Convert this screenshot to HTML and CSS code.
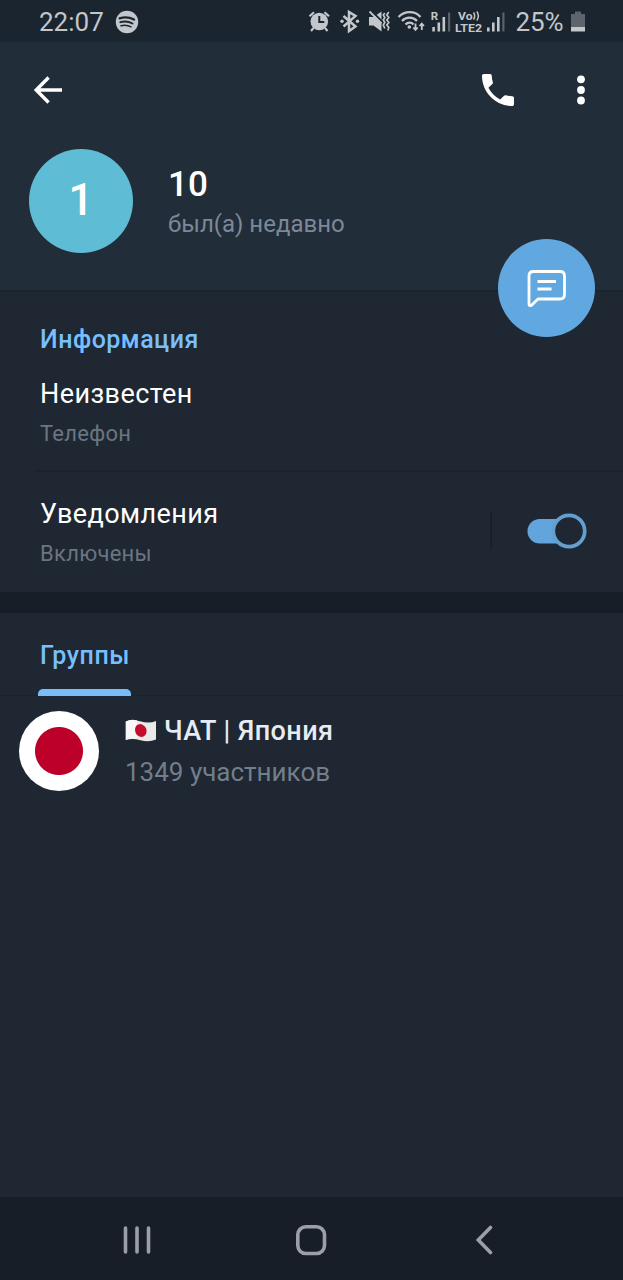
FILE: index.html
```html
<!DOCTYPE html>
<html lang="ru">
<head>
<meta charset="utf-8">
<title>10</title>
<link rel="stylesheet" href="styles.css">
</head>
<body>
<div class="screen">
  <div class="status">
    <span class="clock">22:07</span>
    <svg class="spotify" width="24" height="24" viewBox="0 0 24 24"><circle cx="12" cy="12" r="11.2" fill="#c3c6ca"/><g fill="none" stroke="#1c2630" stroke-linecap="round"><path d="M4.600 8.300c5-1.400 10.200-.9 14.400 1.300" stroke-width="2.300"/><path d="M5.300 12.200c4.200-1.200 8.600-.7 12.200 1.300" stroke-width="1.900"/><path d="M6 15.700c3.500-.9 7-.6 10 1.200" stroke-width="1.500"/></g></svg>
    <svg class="indicators" width="290" height="44" viewBox="300 0 290 44">
      <g fill="#c3c6ca" stroke="#c3c6ca" stroke-width="0">
        <circle cx="319.300" cy="21.500" r="8.800"/>
        <path d="M319.300 16v6h5" fill="none" stroke="#1c2630" stroke-width="2"/>
        <path d="M309.500 16.300l4.500-4M329 16.300l-4.500-4M313.500 28l-2.500 3M325 28l2.500 3" fill="none" stroke-width="2.200"/>
        <path d="M343.500 16l12 10.500-6.500 4.500V12l6.500 4-12 10.500" fill="none" stroke-width="2.500" stroke-linejoin="miter"/>
        <circle cx="342" cy="21.300" r="1.700"/><circle cx="357.500" cy="21.300" r="1.700"/>
        <path d="M369 17h4.500l8-5.500v20l-8-6H369z"/>
        <path d="M371 10.500l12.500 12.500" fill="none" stroke="#1c2630" stroke-width="2"/>
        <path d="M369.500 11.500l12 12" fill="none" stroke-width="1.800"/>
        <path d="M384.800 13l-1.500 2 1.500 2.500-1.500 2.500 1.500 2.500-1.500 2.500 1.500 3.500M388.800 12l-2 3 2 2.500-2 2.500 2 2.500-2 2.500 2 2.500-1 3" fill="none" stroke-width="1.700"/>
        <path d="M398.500 17c6-6.500 16.500-6.500 22 0M402 21c4-4.500 11-4.500 15 0M405.500 24.500c2.200-2.500 6-2.500 8 0" fill="none" stroke-width="2.200"/>
        <circle cx="409.300" cy="27" r="1.800"/>
        <path d="M415.500 23.500v6M413.300 27.500l2.200 2.500 2.200-2.500M421.800 30v-6M419.600 26l2.200-2.500 2.200 2.500" fill="none" stroke-width="1.800"/>
        <path d="M432.300 27h2.600v4.500h-2.600zM437.500 22.500h2.600v9h-2.600zM442.500 17h2.600v14.500h-2.600z"/>
        <path d="M448 12.500h2.200v19H448z" opacity=".38"/>
        <path d="M487 27.500h2.600v4H487zM492 22.500h2.600v9H492zM497 17h2.600v14.500H497z"/>
        <path d="M502.300 12.500h2.200v19h-2.200z" opacity=".38"/>
        <path d="M571 14h4v-2.500h6V14h4v13.500h-14z" fill="#5d646d"/>
        <path d="M571 27h14v4.500h-14z"/>
        <text x="430.700" y="19.500" class="tiny">R</text>
        <text x="458" y="20" class="tiny" textLength="14.500" lengthAdjust="spacingAndGlyphs">Vo</text>
        <path d="M473.500 12.500q2.400 3.500 0 7M476.800 11.500q3.200 4.500 0 9" fill="none" stroke-width="1.500"/>
        <text x="455" y="31.500" class="tiny" textLength="27" lengthAdjust="spacingAndGlyphs">LTE2</text>
        <text x="515.500" y="31" class="percent" textLength="48">25%</text>
      </g>
    </svg>
  </div>
  <header class="header">
    <div class="toolbar">
      <svg width="30" height="30" viewBox="0 0 30 30" fill="none" stroke="#fff" stroke-width="3.400"><path d="M29 15H4M15.600 2.500L3.200 15l12.400 12.500"/></svg>
      <svg class="call" width="32" height="32" viewBox="3 3 18 18" fill="#fff"><path d="M6.620 10.790c1.440 2.830 3.760 5.140 6.590 6.590l2.200-2.200c.27-.27.670-.36 1.020-.24 1.120.37 2.330.57 3.570.57.550 0 1 .45 1 1V20c0 .55-.45 1-1 1C10.610 21 3 13.390 3 4c0-.55.450-1 1-1h3.500c.550 0 1 .45 1 1 0 1.250.200 2.450.570 3.570.110.350.030.740-.250 1.020z"/></svg>
      <svg width="8" height="30" viewBox="0 0 8 30" fill="#fff"><circle cx="4" cy="4.300" r="3.900"/><circle cx="4" cy="15" r="3.900"/><circle cx="4" cy="25.500" r="3.900"/></svg>
    </div>
    <div class="profile">
      <div class="avatar">1</div>
      <div class="who"><div class="name">10</div><div class="seen">был(а) недавно</div></div>
    </div>
    <div class="fab"><svg width="40" height="40" viewBox="0 0 40 40" fill="none" stroke="#fff" stroke-width="2.800" stroke-linejoin="round" stroke-linecap="round"><path d="M6.500 3.500H33q4.500 0 4.500 4.500V26.500q0 4.500-4.500 4.500H11L4.500 37.300Q2 38.500 2 36V8q0-4.500 4.500-4.500z"/><path d="M10.500 13.500h18.500M10.500 21h14" stroke-linecap="butt"/></svg></div>
  </header>
  <section class="info">
    <h2 class="section-title">Информация</h2>
    <div class="row"><div class="value">Неизвестен</div><div class="label">Телефон</div></div>
    <div class="row notify">
      <div class="grow"><div class="value">Уведомления</div><div class="label">Включены</div></div>
      <div class="separator"></div>
      <svg width="60" height="36" viewBox="0 0 60 36"><rect x=".5" y="6" width="46" height="24.500" rx="12.200" fill="#62a5dc"/><circle cx="42" cy="18" r="15.700" fill="#1e2732" stroke="#639fd1" stroke-width="3.700"/></svg>
    </div>
  </section>
  <section class="groups">
    <div class="tabs"><div class="tab">Группы</div></div>
    <div class="chat">
      <div class="chat-avatar"></div>
      <div class="chat-text">
        <div class="chat-title">
          <svg width="32" height="24" viewBox="0 0 32 24"><path d="M.8 2.500Q6-.5 15 2.200T31 2v18.500q-7 3-15.500.7T.8 21z" fill="#e9e9e9"/><path d="M.8 2.500Q6-.5 12 1.500v18.200q-6-1.500-11.200 1.300z" fill="#f7f7f7"/><ellipse cx="15.800" cy="11.500" rx="5.700" ry="6.500" transform="rotate(-25 15.800 11.500)" fill="#c40d2c"/></svg>
          <span>ЧАТ | Япония</span>
        </div>
        <div class="members">1349 участников</div>
      </div>
    </div>
  </section>
  <nav class="nav">
    <svg width="28" height="30" viewBox="0 0 28 30" stroke="#9a9fa8" stroke-width="3.600" stroke-linecap="round"><path d="M2.500 3v24M14 3v24M25.500 3v24"/></svg>
    <svg class="home" width="32" height="32" viewBox="0 0 32 32" fill="none" stroke="#9a9fa8" stroke-width="3.600"><rect x="2.800" y="2.800" width="26.700" height="26.700" rx="8"/></svg>
    <svg width="18" height="30" viewBox="0 0 18 30" fill="none" stroke="#9a9fa8" stroke-width="3.600" stroke-linecap="round"><path d="M15.500 2.500L3.300 15l12.200 12.500"/></svg>
  </nav>
</div>
</body>
</html>
```

FILE: styles.css
```css
* { box-sizing: border-box; }
body { margin: 0; background: #1e2732; font-family: Roboto, "Noto Sans", sans-serif; color: #fff; }
svg { display: block; flex: none; }
.screen { width: 623px; height: 1280px; display: flex; flex-direction: column; overflow: hidden; white-space: nowrap; background: #1e2732; }
.status { height: 42px; background: #1b252f; display: flex; align-items: center; padding: 2px 33px 0 39px; color: #c3c6ca; }
.clock { font-size: 26px; line-height: 40px; width: 76px; }
.indicators { margin-left: auto; margin-top: -1px; }
.tiny { font-size: 11.500px; font-weight: 700; }
.percent { font-size: 26px; }
.header { position: relative; height: 250px; background: #222d3a; border-bottom: 2px solid #1b2430; }
.toolbar { height: 96px; display: flex; align-items: center; padding: 0 38px 0 33px; }
.call { margin-left: auto; margin-right: 63px; }
.profile { display: flex; padding: 11px 0 0 29px; }
.avatar { width: 104px; height: 104px; border-radius: 50%; background: #5fbcd5; font-size: 44px; font-weight: 500; line-height: 103px; text-align: center; }
.who { padding: 15px 0 0 35px; }
.name { font-size: 35px; font-weight: 500; line-height: 42px; }
.seen { font-size: 24px; line-height: 36px; color: #7d8897; }
.fab { position: absolute; left: 498px; top: 197px; width: 97px; height: 98px; border-radius: 50%; background: #62a8e0; display: flex; align-items: center; justify-content: center; z-index: 1; }
.info { height: 300px; }
.section-title { margin: 0; padding: 30px 0 0 40px; font-size: 25px; font-weight: 500; line-height: 36px; letter-spacing: .5px; color: #78bfff; }
.row { margin-left: 36px; padding: 17px 0 0 4px; height: 114px; border-bottom: 2px solid #1a232e; }
.value { font-size: 27px; line-height: 38px; letter-spacing: .42px; }
.label { font-size: 22px; line-height: 32px; padding-top: 5px; height: 40px; letter-spacing: .28px; color: #6b7582; }
.notify { display: flex; height: 120px; padding: 23px 36px 0 4px; border: 0; }
.grow { flex: 1; }
.separator { width: 2px; height: 38px; margin: 17px 35px 0 0; background: #18212b; }
.notify svg { margin-top: 18px; }
.groups { border-top: 21px solid #171e27; flex: 1; }
.tabs { height: 83px; border-bottom: 1px solid #18212c; padding-left: 38px; display: flex; }
.tab { width: 93px; height: 83px; padding-left: 2px; position: relative; font-size: 25px; font-weight: 500; line-height: 85px; letter-spacing: .6px; color: #78bfff; }
.tab::after { content: ""; position: absolute; left: 0; bottom: 0; width: 93px; height: 7px; border-radius: 5px 5px 0 0; background: #78bdf8; }
.chat { display: flex; padding: 15px 0 0 19px; }
.chat-avatar { width: 80px; height: 80px; border-radius: 50%; background: radial-gradient(circle, #bd0029 23.500px, #fff 24.500px); }
.chat-text { padding-left: 26px; }
.chat-title { display: flex; align-items: center; gap: 7px; height: 40px; font-size: 27px; line-height: 40px; font-weight: 500; letter-spacing: .44px; color: #e6ecf5; }
.members { font-size: 26px; line-height: 42px; color: #737e8b; }
.nav { height: 83px; background: #171e27; display: flex; align-items: center; padding: 3px 130px 0 123px; justify-content: space-between; }
.home { margin-right: 4px; }
```
